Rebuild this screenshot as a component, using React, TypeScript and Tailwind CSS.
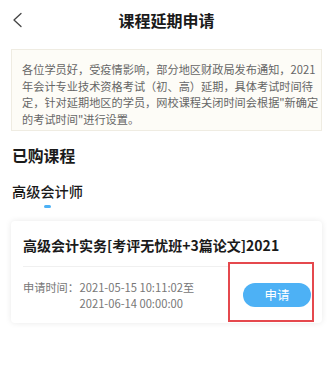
import React from 'react';

const noticeLines = [
  '各位学员好，受疫情影响，部分地区财政局发布通知，2021',
  '年会计专业技术资格考试（初、高）延期，具体考试时间待',
  '定，针对延期地区的学员，网校课程关闭时间会根据"新确定',
  '的考试时间"进行设置。',
];

export default function App() {
  return (
    <div
      className="w-[333px] h-[374px] bg-white overflow-hidden"
      style={{ fontFamily: '"Noto Sans CJK SC", "Noto Sans", sans-serif' }}
    >
      {/* header */}
      <div className="relative h-[49px] flex items-center justify-center">
        <svg className="absolute left-[12px] top-[12px]" width="11" height="16" viewBox="0 0 11 16" fill="none">
          <path d="M9 1.5 L2 8 L9 14.5" stroke="#444" strokeWidth="1.3" strokeLinecap="round" strokeLinejoin="round" />
        </svg>
        <h1 className="text-[16px] leading-[22px] font-bold text-[#1a1a1a] -mt-[10px]">课程延期申请</h1>
      </div>

      {/* notice */}
      <div className="mx-[11px] h-[82px] border border-[#efece2] bg-[#fdfcf7] px-[10px] pt-[11px]">
        {noticeLines.map((line) => (
          <p key={line} className="text-[11.2px] leading-[16.7px] text-[#666] whitespace-nowrap">
            {line}
          </p>
        ))}
      </div>

      <h2 className="mt-[14px] ml-[12px] text-[15.8px] leading-[22px] font-semibold text-[#1a1a1a]">已购课程</h2>

      <div className="mt-[14px] ml-[12px] inline-flex flex-col items-center">
        <span className="text-[14.2px] leading-[20px] font-medium text-[#1a1a1a]">高级会计师</span>
        <span className="mt-[4px] w-[7px] h-[2.5px] rounded-full bg-[#4db1f5]" />
      </div>

      {/* card */}
      <div className="relative mx-[11px] mt-[13px] rounded-[4px] bg-white shadow-[0_0_6px_rgba(0,0,0,0.09)] pt-[14px] pb-[12px]">
        <div className="px-[12px] text-[14px] leading-[20px] font-bold text-[#1a1a1a] whitespace-nowrap">
          高级会计实务[考评无忧班+3篇论文]2021
        </div>
        <div className="mx-[12px] mt-[11px] h-px bg-[#f0f0f0]" />

        {/* annotation box */}
        <div className="absolute left-[217px] top-[41px] w-[86px] h-[60px] border-2 border-[#e5484d] bg-white" />

        <div className="relative flex items-center pl-[12px] pr-[11px] pt-[12px]">
          <div className="flex flex-1 text-[11.2px] leading-[16px] text-[#777]">
            <span className="w-[56.5px] shrink-0">申请时间：</span>
            <span>
              2021-05-15 10:11:02至
              <br />
              2021-06-14 00:00:00
            </span>
          </div>
          <button className="w-[68px] h-[24px] rounded-full bg-[#4db1f5] text-white text-[12.5px] leading-[24px]">
            申请
          </button>
        </div>
      </div>
    </div>
  );
}
